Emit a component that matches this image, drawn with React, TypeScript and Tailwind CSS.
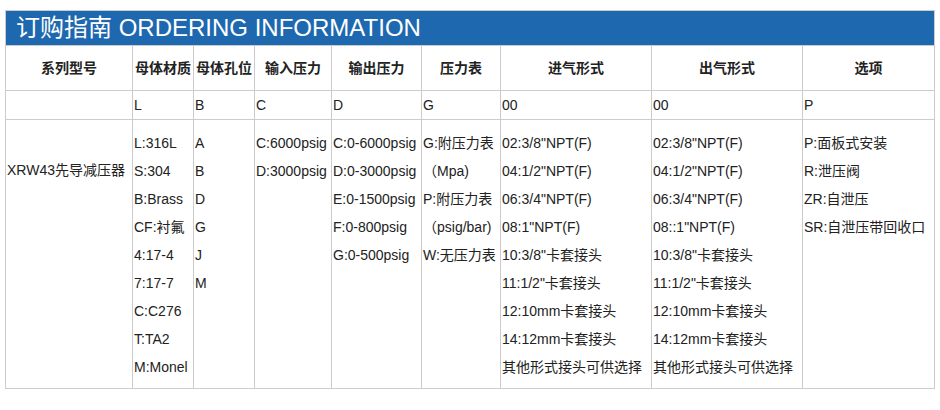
import React from "react";

const cols = "grid-cols-[127px_61px_61px_77px_90px_79px_151px_151px_132px]";

const headers = ["系列型号", "母体材质", "母体孔位", "输入压力", "输出压力", "压力表", "进气形式", "出气形式", "选项"];
const codes = ["", "L", "B", "C", "D", "G", "00", "00", "P"];

const body: string[][] = [
  ["L:316L", "S:304", "B:Brass", "CF:衬氟", "4:17-4", "7:17-7", "C:C276", "T:TA2", "M:Monel"],
  ["A", "B", "D", "G", "J", "M"],
  ["C:6000psig", "D:3000psig"],
  ["C:0-6000psig", "D:0-3000psig", "E:0-1500psig", "F:0-800psig", "G:0-500psig"],
  ["G:附压力表", "（Mpa)", "P:附压力表", "（psig/bar)", "W:无压力表"],
  [
    "02:3/8\"NPT(F)",
    "04:1/2\"NPT(F)",
    "06:3/4\"NPT(F)",
    "08:1\"NPT(F)",
    "10:3/8\"卡套接头",
    "11:1/2\"卡套接头",
    "12:10mm卡套接头",
    "14:12mm卡套接头",
    "其他形式接头可供选择",
  ],
  [
    "02:3/8\"NPT(F)",
    "04:1/2\"NPT(F)",
    "06:3/4\"NPT(F)",
    "08::1\"NPT(F)",
    "10:3/8\"卡套接头",
    "11:1/2\"卡套接头",
    "12:10mm卡套接头",
    "14:12mm卡套接头",
    "其他形式接头可供选择",
  ],
  ["P:面板式安装", "R:泄压阀", "ZR:自泄压", "SR:自泄压带回收口"],
];

export default function App() {
  return (
    <div
      className="w-[940px] h-[410px] bg-white text-[#222]"
      style={{ fontFamily: '"Liberation Sans", Arial, "Noto Sans CJK SC", sans-serif' }}
    >
      <div className="pt-[10px] pl-[5px]">
        <div className="w-[930px] border-r border-b border-[#cccccc]">
          <div className="h-[35px] border-t border-l border-[#cccccc] bg-[#1e68b0] flex items-center pl-[10px] text-white text-[24px] leading-none whitespace-nowrap">
            订购指南 ORDERING INFORMATION
          </div>
          <div className={`grid ${cols}`}>
            {headers.map((h, i) => (
              <div
                key={"h" + i}
                className="h-[45px] border-t border-l border-[#cccccc] flex items-center justify-center font-bold text-[14px] whitespace-nowrap"
              >
                {h}
              </div>
            ))}
            {codes.map((c, i) => (
              <div
                key={"c" + i}
                className="h-[29px] border-t border-l border-[#cccccc] flex items-center pl-px text-[14px] whitespace-nowrap"
              >
                {c}
              </div>
            ))}
            <div className="h-[269px] border-t border-l border-[#cccccc] pl-px pt-[36px] text-[14px] leading-[28px] whitespace-nowrap">
              XRW43先导减压器
            </div>
            {body.map((col, i) => (
              <div
                key={"b" + i}
                className="h-[269px] border-t border-l border-[#cccccc] pl-px pt-[9px] text-[14px] leading-[28px] whitespace-nowrap"
              >
                {col.map((t, j) => (
                  <div key={j}>{t}</div>
                ))}
              </div>
            ))}
          </div>
        </div>
      </div>
    </div>
  );
}
